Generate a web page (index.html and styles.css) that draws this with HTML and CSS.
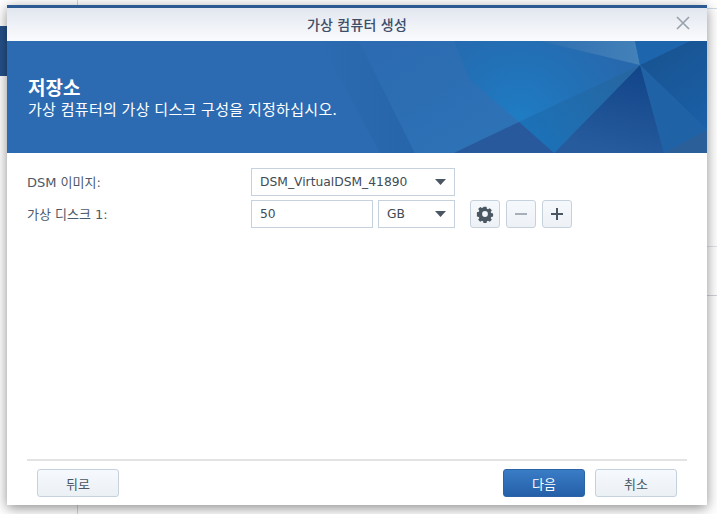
FILE: index.html
```html
<!DOCTYPE html>
<html lang="ko">
<head>
<meta charset="utf-8">
<title>가상 컴퓨터 생성</title>
<link rel="stylesheet" href="styles.css">
</head>
<body>
<div class="desktop-tab"></div>
<div class="desktop-line"></div>
<div class="desktop-rule desktop-rule-a"></div>
<div class="desktop-rule desktop-rule-b"></div>
<div class="desktop-rule desktop-rule-c"></div>
<main class="dialog">
  <header class="titlebar">
    <span class="title">가상 컴퓨터 생성</span>
    <svg class="close" width="14" height="14" viewBox="0 0 14 14"><path d="M1 1L13 13M13 1L1 13" stroke="#9aa3ab" stroke-width="1.7" fill="none"/></svg>
  </header>
  <section class="banner">
    <svg class="banner-art" viewBox="7 41 700 112" preserveAspectRatio="none">
      <defs>
        <radialGradient id="g1" gradientUnits="userSpaceOnUse" cx="519" cy="122" r="120"><stop offset="0" stop-color="#1f7dc4"/><stop offset=".55" stop-color="#2270b6"/><stop offset="1" stop-color="#2868ad"/></radialGradient>
        <linearGradient id="g2" gradientUnits="userSpaceOnUse" x1="400" y1="41" x2="470" y2="153"><stop offset="0" stop-color="#2c6bb1"/><stop offset="1" stop-color="#2e72b6"/></linearGradient>
        <linearGradient id="g0" gradientUnits="userSpaceOnUse" x1="320" y1="0" x2="400" y2="0"><stop offset="0" stop-color="#2c6bb1"/><stop offset="1" stop-color="#2866ab"/></linearGradient>
        <linearGradient id="g4" gradientUnits="userSpaceOnUse" x1="540" y1="41" x2="640" y2="50"><stop offset="0" stop-color="#2d6fb0"/><stop offset="1" stop-color="#4481b9"/></linearGradient>
        <linearGradient id="g5" gradientUnits="userSpaceOnUse" x1="640" y1="65" x2="620" y2="153"><stop offset="0" stop-color="#114488"/><stop offset="1" stop-color="#265b9e"/></linearGradient>
        <linearGradient id="g6" gradientUnits="userSpaceOnUse" x1="640" y1="65" x2="540" y2="145"><stop offset="0" stop-color="#27659f"/><stop offset="1" stop-color="#1c71b7"/></linearGradient>
        <linearGradient id="g7" gradientUnits="userSpaceOnUse" x1="640" y1="41" x2="700" y2="130"><stop offset="0" stop-color="#17528f"/><stop offset="1" stop-color="#1b5fa6"/></linearGradient>
      </defs>
      <rect x="7" y="41" width="700" height="112" fill="#2c6bb1"/>
      <polygon points="320,41 359,41 415,153 380,153" fill="url(#g0)"/>
      <polygon points="359,41 470,41 519,122 454,153 415,153" fill="url(#g2)"/>
      <polygon points="454,41 540,41 640,65 519,122 470,80" fill="url(#g1)"/>
      <polygon points="540,41 635,41 640,65" fill="url(#g4)"/>
      <polygon points="635,41 690,41 640,65" fill="#1d66ae"/>
      <polygon points="690,41 707,41 707,130 640,65" fill="url(#g7)"/>
      <polygon points="640,65 707,130 664,153" fill="#1f62a6"/>
      <polygon points="707,130 707,153 664,153" fill="#2a5f9a"/>
      <polygon points="640,65 664,153 554,153" fill="url(#g5)"/>
      <polygon points="640,65 554,153 519,122" fill="url(#g6)"/>
      <polygon points="519,122 554,153 454,153" fill="#28599c"/>
    </svg>
    <h1 class="banner-title">저장소</h1>
    <p class="banner-text">가상 컴퓨터의 가상 디스크 구성을 지정하십시오.</p>
  </section>
  <form class="form">
    <div class="row">
      <label class="label">DSM 이미지:</label>
      <div class="field select wide"><span>DSM_VirtualDSM_41890</span><svg width="12" height="6" viewBox="0 0 12 6"><path d="M0 0H11L5.500 6Z" fill="#4a5661"/></svg></div>
    </div>
    <div class="row">
      <label class="label">가상 디스크 1:</label>
      <div class="field size"><span>50</span></div>
      <div class="field select unit"><span>GB</span><svg width="12" height="6" viewBox="0 0 12 6"><path d="M0 0H11L5.500 6Z" fill="#4a5661"/></svg></div>
      <div class="tools">
        <button type="button" class="tool"><svg width="18" height="18" viewBox="0 0 18 18"><path fill="#4a5661" fill-rule="evenodd" d="M7.300 1h3.400l.4 2.200 1.300.6 1.900-1.300 2.300 2.400-1.300 1.800.6 1.300 2.100.4v3.400l-2.100.4-.6 1.300 1.300 1.900-2.300 2.300-1.900-1.300-1.300.6-.4 2.100H7.300l-.4-2.100-1.300-.6-1.900 1.300-2.300-2.300 1.300-1.900-.6-1.300-2.100-.4V7l2.100-.4.6-1.300-1.300-1.800 2.300-2.400 1.900 1.300 1.300-.6ZM9 5.800a3.200 3.200 0 1 0 0 6.400 3.200 3.200 0 0 0 0-6.400Z" transform="translate(.9 .9) scale(.9)"/></svg></button>
        <button type="button" class="tool"><svg width="14" height="14" viewBox="0 0 14 14"><rect x="1" y="6" width="12" height="2" fill="#a6afb8"/></svg></button>
        <button type="button" class="tool"><svg width="14" height="14" viewBox="0 0 14 14"><path d="M1 6H6V1H8V6H13V8H8V13H6V8H1Z" fill="#4a5661"/></svg></button>
      </div>
    </div>
  </form>
  <footer class="footer">
    <button type="button" class="btn">뒤로</button>
    <div class="footer-right">
      <button type="button" class="btn primary">다음</button>
      <button type="button" class="btn">취소</button>
    </div>
  </footer>
</main>
</body>
</html>
```

FILE: styles.css
```css
* { box-sizing: border-box; }
html, body { margin: 0; height: 100%; }
body {
  position: relative;
  width: 717px;
  height: 514px;
  overflow: hidden;
  background: #fff;
  font-family: "DejaVu Sans", "Noto Sans CJK KR", sans-serif;
  font-size: 12px;
  color: #414b55;
}
.desktop-tab { position: absolute; left: 0; top: 26px; width: 10px; height: 50px; background: #25528a; }
.desktop-line { position: absolute; left: 77px; top: 0; width: 1px; height: 514px; background: #d4d6d8; }
.desktop-rule { position: absolute; left: 707px; width: 10px; height: 1px; background: #dfe3e8; }
.desktop-rule-a { top: 8px; background: #cfdcea; }
.desktop-rule-b { top: 246px; }
.desktop-rule-c { top: 295px; background: #cfd3d8; }
.dialog {
  position: absolute;
  left: 7px;
  top: 5px;
  width: 700px;
  height: 500px;
  display: flex;
  flex-direction: column;
  background: #fff;
  border-top: 3px solid #2c5a93;
  box-shadow: 0 3px 12px rgba(0, 0, 0, .45);
}
.titlebar {
  height: 33px;
  flex: none;
  position: relative;
  display: flex;
  align-items: center;
  justify-content: center;
  background: linear-gradient(#e2e7ef, #fafbfd);
}
.title { font-family: "Noto Sans CJK KR", sans-serif; font-size: 14px; letter-spacing: .25px; font-weight: 500; color: #3d4e6b; position: relative; top: -1px; }
.close { position: absolute; right: 17px; top: 8px; }
.banner {
  height: 112px;
  flex: none;
  position: relative;
  padding: 34px 21px 0;
  color: #fff;
  font-family: "Noto Sans CJK KR", sans-serif;
  overflow: hidden;
}
.banner-art { position: absolute; left: 0; top: 0; width: 700px; height: 112px; }
.banner-title { position: relative; margin: 0; font-size: 19px; font-weight: 700; line-height: 24px; }
.banner-text { position: relative; margin: 0; font-size: 15px; letter-spacing: .3px; line-height: 20px; }
.form { flex: 1; padding: 15px 20px 0; display: flex; flex-direction: column; gap: 4px; }
.row { display: flex; align-items: center; height: 28px; }
.label { width: 224px; flex: none; font-size: 13px; color: #4c5a68; position: relative; top: -1px; }
.field {
  height: 28px;
  display: flex;
  align-items: center;
  padding: 0 8px;
  border: 1px solid #c6d1de;
  background: #fff;
  font-size: 12.3px;
  color: #414b55;
}
.select { justify-content: space-between; padding-right: 7px; }
.wide { width: 204px; }
.size { width: 122px; }
.unit { width: 77px; margin-left: 5px; }
.tools { display: flex; gap: 6px; margin-left: 15px; }
.tool {
  width: 30px;
  height: 28px;
  padding: 0;
  display: flex;
  align-items: center;
  justify-content: center;
  border: 1px solid #c6d1de;
  border-radius: 3px;
  background: linear-gradient(#f6f9fc, #edf1f6);
}
.footer {
  flex: none;
  height: 46px;
  margin: 0 20px;
  padding: 8px 10px 0;
  border-top: 2px solid #e3e3e3;
  display: flex;
  justify-content: space-between;
}
.footer-right { display: flex; gap: 10px; }
.btn {
  width: 82px;
  height: 28px;
  padding: 0;
  border: 1px solid #c6d1de;
  border-radius: 3px;
  background: linear-gradient(#f6f9fd, #ebf0f5);
  font-family: "Noto Sans CJK KR", sans-serif;
  font-size: 13px;
  color: #4a5661;
}
.primary {
  border-color: #2a64a6;
  background: linear-gradient(#3a7cc6, #2460a8);
  color: #fff;
}
```
